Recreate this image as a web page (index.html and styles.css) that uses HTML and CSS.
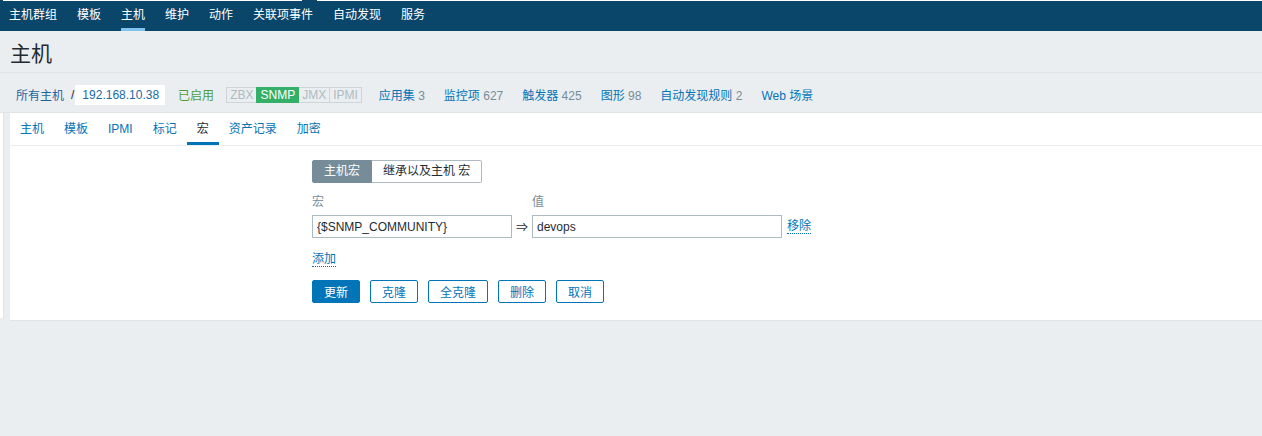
FILE: index.html
```html
<!DOCTYPE html>
<html>
<head>
	<meta charset="UTF-8">
	<title>主机</title>
	<link rel="stylesheet" href="styles.css">
</head>
<body>
	<div class="topline"></div>
	<nav class="subnav">
		<a href="#">主机群组</a>
		<a href="#">模板</a>
		<a href="#" class="selected">主机</a>
		<a href="#">维护</a>
		<a href="#">动作</a>
		<a href="#">关联项事件</a>
		<a href="#">自动发现</a>
		<a href="#">服务</a>
	</nav>
	<div class="header">
		<h1>主机</h1>
	</div>
	<div class="crumbs">
		<a href="#" class="crumb-root">所有主机</a>
		<span class="sep">/</span>
		<span class="host-box">192.168.10.38</span>
		<span class="enabled">已启用</span>
		<div class="status-group">
			<span class="status grey">ZBX</span>
			<span class="status green">SNMP</span>
			<span class="status grey">JMX</span>
			<span class="status grey">IPMI</span>
		</div>
		<div class="crumb-links">
			<span><a href="#">应用集</a> <sup>3</sup></span>
			<span><a href="#">监控项</a> <sup>627</sup></span>
			<span><a href="#">触发器</a> <sup>425</sup></span>
			<span><a href="#">图形</a> <sup>98</sup></span>
			<span><a href="#">自动发现规则</a> <sup>2</sup></span>
			<span><a href="#">Web 场景</a></span>
		</div>
	</div>
	<div class="main">
		<div class="side"></div>
		<div class="panel">
			<ul class="tabs">
				<li><a href="#">主机</a></li>
				<li><a href="#">模板</a></li>
				<li><a href="#">IPMI</a></li>
				<li><a href="#">标记</a></li>
				<li class="active"><a href="#">宏</a></li>
				<li><a href="#">资产记录</a></li>
				<li><a href="#">加密</a></li>
			</ul>
			<div class="form">
				<div class="segmented">
					<span class="seg on">主机宏</span>
					<span class="seg">继承以及主机 宏</span>
				</div>
				<div class="macro-head">
					<span class="col-macro">宏</span>
					<span class="col-arrow"></span>
					<span class="col-value">值</span>
				</div>
				<div class="macro-row">
					<input class="col-macro" type="text" value="{$SNMP_COMMUNITY}">
					<span class="col-arrow">⇒</span>
					<input class="col-value" type="text" value="devops">
					<a href="#" class="dotted remove">移除</a>
				</div>
				<div class="add-row">
					<a href="#" class="dotted">添加</a>
				</div>
				<div class="buttons">
					<button class="btn primary">更新</button>
					<button class="btn">克隆</button>
					<button class="btn">全克隆</button>
					<button class="btn">删除</button>
					<button class="btn">取消</button>
				</div>
			</div>
		</div>
	</div>
</body>
</html>
```

FILE: styles.css
```css
/* Base */
body {
	margin: 0;
	background-color: #ebeef0;
	font-family: "Liberation Sans", "Noto Sans CJK SC", sans-serif;
	font-size: 12px;
	color: #1f2c33;
}
a {
	color: #0275b8;
	text-decoration: none;
}

/* Top menu */
.topline {
	height: 1px;
	background: linear-gradient(to right, #0a466a 3px, #fff 3px, #fff 302px, #0a466a 302px, #0a466a 317px, #fff 317px);
}
.subnav {
	display: flex;
	height: 30px;
	padding-left: 9px;
	background-color: #0a466a;
}
.subnav a {
	display: block;
	margin-right: 20px;
	line-height: 29px;
	color: #fff;
}
.subnav a.selected {
	box-shadow: inset 0 -3px 0 #80c3ee;
}

/* Page title */
.header {
	display: flex;
	align-items: center;
	height: 41px;
	padding-left: 10px;
	border-bottom: 1px solid #dfe4e7;
}
.header h1 {
	margin: 0;
	font-size: 21px;
	font-weight: normal;
	color: #1f2c33;
}

/* Host breadcrumbs */
.crumbs {
	display: flex;
	align-items: center;
	height: 35px;
	padding: 4px 0 0 16px;
	border-bottom: 1px solid #dfe4e7;
}
.crumb-root {
	color: #1c66a0;
}
.sep {
	margin: 0 1px 0 7px;
	color: #1f2c33;
}
.host-box {
	height: 20px;
	line-height: 20px;
	padding: 0 6px 0 7px;
	background-color: #fff;
	color: #1c6aa8;
}
.enabled {
	margin-left: 13px;
	color: #4f9e3a;
}
.status-group {
	display: flex;
	margin-left: 12px;
}
.status {
	height: 14px;
	line-height: 14px;
	padding: 0 3px;
	border: 1px solid #cdd5d9;
}
.status + .status {
	margin-left: -1px;
}
.status.grey {
	color: #acbbc2;
}
.status.green {
	position: relative;
	background-color: #34af67;
	border-color: #34af67;
	color: #fff;
}
.crumb-links {
	display: flex;
	margin-left: 17px;
}
.crumb-links span {
	margin-right: 19px;
}
.crumb-links sup {
	vertical-align: baseline;
	font-size: 12px;
	color: #768d99;
}

/* Main panel */
.main {
	display: flex;
}
.side {
	width: 3px;
	height: 205px;
	background-color: #fff;
	border-right: 1px solid #dfe4e7;
}
.panel {
	flex: 1;
	margin-left: 6px;
	background-color: #fff;
	border-bottom: 1px solid #dfe4e7;
}
.tabs {
	display: flex;
	margin: 0;
	padding: 0;
	list-style: none;
	border-bottom: 1px solid #ebeef0;
}
.tabs li a {
	display: block;
	padding: 0 10px;
	line-height: 32px;
}
.tabs li.active a {
	color: #1f2c33;
	box-shadow: inset 0 -3px 0 #0275b8;
}

/* Macros form */
.form {
	padding: 14px 0 17px 302px;
}
.segmented {
	display: flex;
}
.seg {
	height: 21px;
	line-height: 21px;
	padding: 0 11px;
	border: 1px solid #acbbc2;
	border-left: none;
	border-radius: 0 2px 2px 0;
}
.seg.on {
	background-color: #768d99;
	border: 1px solid #768d99;
	border-radius: 2px 0 0 2px;
	color: #fff;
}
.macro-head {
	display: flex;
	margin-top: 12px;
	line-height: 14px;
	color: #768d99;
}
.col-macro {
	width: 200px;
}
.col-arrow {
	width: 20px;
	text-align: center;
}
.col-value {
	width: 250px;
}
.macro-row {
	display: flex;
	align-items: center;
	margin-top: 6px;
}
.macro-row input {
	box-sizing: border-box;
	height: 23px;
	margin: 0;
	padding: 0 4px;
	border: 1px solid #acbbc2;
	font-family: inherit;
	font-size: 12px;
	color: #1f2c33;
}
.macro-row .col-arrow {
	color: #1f2c33;
}
.dotted {
	border-bottom: 1px dotted #0275b8;
	line-height: 14px;
}
.remove {
	margin-left: 5px;
}
.add-row {
	margin-top: 14px;
	height: 15px;
}
.buttons {
	display: flex;
	gap: 10px;
	margin-top: 13px;
}
.btn {
	height: 23px;
	padding: 0 11px;
	border: 1px solid #0275b8;
	border-radius: 2px;
	background-color: #fff;
	font-family: inherit;
	font-size: 12px;
	color: #0275b8;
}
.btn.primary {
	background-color: #0275b8;
	color: #fff;
}
```
